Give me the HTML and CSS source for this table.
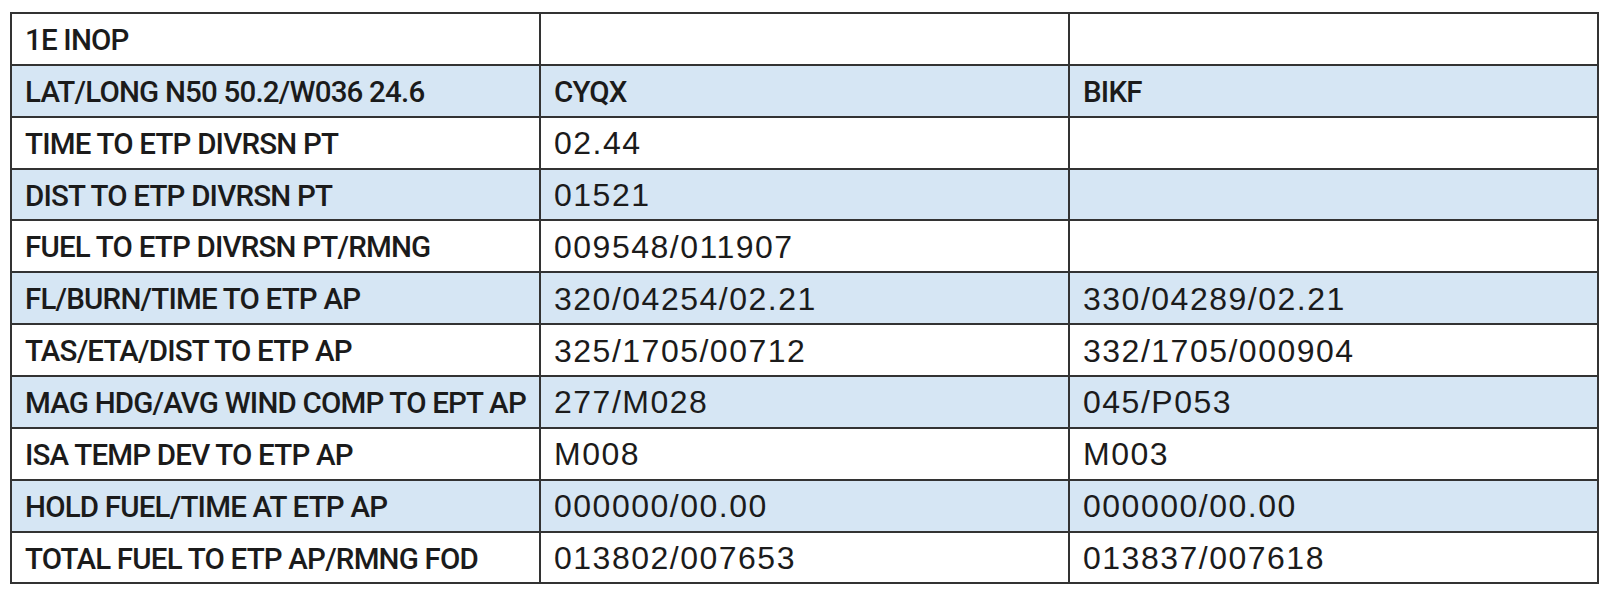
FILE: index.html
```html
<!DOCTYPE html>
<html>
<head>
<meta charset="utf-8">
<link rel="stylesheet" href="styles.css">
</head>
<body>
<table class="etp">
  <tr><td class="lbl">1E INOP</td><td></td><td></td></tr>
  <tr class="alt"><td class="lbl">LAT/LONG N50 50.2/W036 24.6</td><td class="lbl">CYQX</td><td class="lbl">BIKF</td></tr>
  <tr><td class="lbl">TIME TO ETP DIVRSN PT</td><td>02.44</td><td></td></tr>
  <tr class="alt"><td class="lbl">DIST TO ETP DIVRSN PT</td><td>01521</td><td></td></tr>
  <tr><td class="lbl">FUEL TO ETP DIVRSN PT/RMNG</td><td>009548/011907</td><td></td></tr>
  <tr class="alt"><td class="lbl">FL/BURN/TIME TO ETP AP</td><td>320/04254/02.21</td><td>330/04289/02.21</td></tr>
  <tr><td class="lbl">TAS/ETA/DIST TO ETP AP</td><td>325/1705/00712</td><td>332/1705/000904</td></tr>
  <tr class="alt"><td class="lbl">MAG HDG/AVG WIND COMP TO EPT AP</td><td>277/M028</td><td>045/P053</td></tr>
  <tr><td class="lbl">ISA TEMP DEV TO ETP AP</td><td>M008</td><td>M003</td></tr>
  <tr class="alt"><td class="lbl">HOLD FUEL/TIME AT ETP AP</td><td>000000/00.00</td><td>000000/00.00</td></tr>
  <tr><td class="lbl">TOTAL FUEL TO ETP AP/RMNG FOD</td><td>013802/007653</td><td>013837/007618</td></tr>
</table>
</body>
</html>
```
FILE: styles.css
```css
html, body {
  margin: 0;
  padding: 0;
  background: #ffffff;
}
body {
  padding: 12px 0 0 10px;
}
.etp {
  border-collapse: collapse;
  width: 1589px;
  table-layout: fixed;
  color: #1b1b1b;
}
.etp td {
  width: 33.333%;
  height: 51.86px;
  box-sizing: border-box;
  border: 2px solid #333333;
  padding: 2px 0 0 13px;
  vertical-align: middle;
  font-family: "Liberation Sans", Arial, sans-serif;
  font-size: 32px;
  letter-spacing: 1.5px;
  white-space: nowrap;
  overflow: hidden;
}
.etp td.lbl {
  font-family: Roboto, "Liberation Sans", sans-serif;
  font-weight: 500;
  font-size: 29.5px;
  letter-spacing: -0.8px;
}
.etp tr.alt td {
  background: #d6e6f4;
}
```
